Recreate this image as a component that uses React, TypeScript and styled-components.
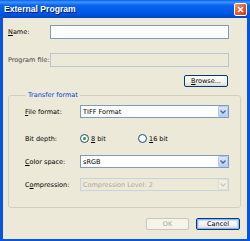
import styled, { createGlobalStyle } from "styled-components";

const Global = createGlobalStyle`
  html, body {
    margin: 0;
    padding: 0;
    background: #ffffff;
  }
  * {
    box-sizing: border-box;
  }
`;

const Window = styled.div`
  width: 250px;
  height: 241px;
  display: flex;
  flex-direction: column;
  background: #0855dd;
  font-family: "DejaVu Sans", "Liberation Sans", sans-serif;
  font-size: 6.5px;
  color: #000000;
  overflow: hidden;
`;

const TitleBar = styled.div`
  height: 18px;
  flex: none;
  display: flex;
  align-items: center;
  justify-content: space-between;
  padding: 0 3px 0 4px;
  background: linear-gradient(
    180deg,
    #0a5fe8 0%,
    #3d95ff 12%,
    #0a62f0 30%,
    #0058e6 70%,
    #0046c8 100%
  );
`;

const Title = styled.span`
  color: #ffffff;
  font-family: "Liberation Sans", "DejaVu Sans", sans-serif;
  font-weight: bold;
  font-size: 8.6px;
  text-shadow: 1px 1px 0 #0a1e6e;
`;

const CloseBtn = styled.div`
  width: 13px;
  height: 13px;
  border: 1px solid #ffffff;
  border-radius: 2px;
  background: linear-gradient(135deg, #f29a74 0%, #e35b2c 50%, #c2401a 100%);
  display: flex;
  align-items: center;
  justify-content: center;
`;

const Body = styled.div`
  flex: 1;
  margin: 0 3px 2px 3px;
  background: #ece9d8;
  padding: 7px 6px 0 5px;
  display: flex;
  flex-direction: column;
`;

const FieldRow = styled.div<{ $mb: number }>`
  display: flex;
  align-items: center;
  margin-bottom: ${({ $mb }) => $mb}px;
  padding-right: 12px;
`;

const Label = styled.label<{ $w: number; $muted?: boolean }>`
  width: ${({ $w }) => $w}px;
  flex: none;
  color: ${({ $muted }) => ($muted ? "#444444" : "#000000")};
  white-space: nowrap;
`;

const TextBox = styled.div<{ $disabled?: boolean }>`
  flex: 1;
  height: 14px;
  border: 1px solid #7f9db9;
  background: ${({ $disabled }) => ($disabled ? "#ece9d8" : "#ffffff")};
  ${({ $disabled }) => ($disabled ? "border-color: #b9c6d2;" : "")}
`;

const BrowseRow = styled.div`
  display: flex;
  justify-content: flex-end;
  padding-right: 13px;
  margin-bottom: 4px;
`;

const Button = styled.div<{ $disabled?: boolean; $default?: boolean; $w: number }>`
  width: ${({ $w }) => $w}px;
  height: 12px;
  border: 1px solid ${({ $disabled }) => ($disabled ? "#c9c7ba" : "#003c74")};
  border-radius: 2px;
  background: ${({ $disabled }) =>
    $disabled ? "#f5f4ea" : "linear-gradient(180deg, #ffffff 0%, #f3f3ef 60%, #dcdad0 100%)"};
  color: ${({ $disabled }) => ($disabled ? "#aca899" : "#000000")};
  box-shadow: ${({ $default }) =>
    $default ? "inset 0 0 0 1px #8fb2f2, inset 0 0 0 2px #cfdcf7" : "none"};
  display: flex;
  align-items: center;
  justify-content: center;
  line-height: 1;
`;

const Group = styled.fieldset`
  margin: 0;
  padding: 6px 11px 16px 16px;
  border: 1px solid #d0d0bf;
  border-radius: 3px;
  display: flex;
  flex-direction: column;
  min-inline-size: 0;
`;

const Legend = styled.legend`
  color: #0046d5;
  padding: 0 2px;
  margin-left: 1px;
`;

const GroupRow = styled.div<{ $mb: number }>`
  display: flex;
  align-items: center;
  height: 13px;
  margin-bottom: ${({ $mb }) => $mb}px;
`;

const Select = styled.div<{ $disabled?: boolean }>`
  flex: 1;
  height: 13px;
  border: 1px solid ${({ $disabled }) => ($disabled ? "#c9d3dc" : "#7f9db9")};
  background: ${({ $disabled }) => ($disabled ? "#ece9d8" : "#ffffff")};
  display: flex;
  align-items: center;
  padding-left: 2px;
  color: ${({ $disabled }) => ($disabled ? "#aca899" : "#000000")};
`;

const SelectText = styled.span`
  flex: 1;
`;

const DropBtn = styled.div<{ $disabled?: boolean }>`
  width: 10px;
  height: 11px;
  background: ${({ $disabled }) =>
    $disabled ? "#f1efe2" : "linear-gradient(180deg, #dbe6fd 0%, #b8cdf8 100%)"};
  border: 1px solid ${({ $disabled }) => ($disabled ? "#e0ded2" : "#b6c8f3")};
  border-radius: 1px;
  display: flex;
  align-items: center;
  justify-content: center;
`;

const Radios = styled.div`
  flex: 1;
  display: flex;
  align-items: center;
`;

const RadioItem = styled.div<{ $w: number }>`
  width: ${({ $w }) => $w}px;
  display: flex;
  align-items: center;
  gap: 2px;
`;

const RadioDot = styled.div<{ $checked?: boolean }>`
  width: 9px;
  height: 9px;
  border-radius: 50%;
  border: 1px solid #1c5180;
  background: radial-gradient(circle, #ffffff 40%, #e4e3dc 100%);
  display: flex;
  align-items: center;
  justify-content: center;
  &::after {
    content: "";
    width: 3px;
    height: 3px;
    border-radius: 50%;
    background: ${({ $checked }) => ($checked ? "#21a121" : "transparent")};
  }
`;

const Footer = styled.div`
  display: flex;
  justify-content: flex-end;
  gap: 7px;
  padding-right: 1px;
  margin-top: 10px;
`;

const Chevron = ({ color }: { color: string }) => (
  <svg width="6" height="4" viewBox="0 0 6 4">
    <path d="M0.5 0.5 L3 3 L5.5 0.5" fill="none" stroke={color} strokeWidth="1.3" />
  </svg>
);

const App = () => {
  return (
    <>
      <Global />
      <Window>
        <TitleBar>
          <Title>External Program</Title>
          <CloseBtn>
            <svg width="7" height="7" viewBox="0 0 7 7">
              <path d="M1 1 L6 6 M6 1 L1 6" stroke="#ffffff" strokeWidth="1.6" />
            </svg>
          </CloseBtn>
        </TitleBar>
        <Body>
          <FieldRow $mb={14}>
            <Label $w={42}>
              <u>N</u>ame:
            </Label>
            <TextBox />
          </FieldRow>
          <FieldRow $mb={8}>
            <Label $w={42} $muted>
              Program file:
            </Label>
            <TextBox $disabled />
          </FieldRow>
          <BrowseRow>
            <Button $w={44}>
              <span>
                <u>B</u>rowse...
              </span>
            </Button>
          </BrowseRow>
          <Group>
            <Legend>Transfer format</Legend>
            <GroupRow $mb={14}>
              <Label $w={55}>
                <u>F</u>ile format:
              </Label>
              <Select>
                <SelectText>TIFF Format</SelectText>
                <DropBtn>
                  <Chevron color="#4d6185" />
                </DropBtn>
              </Select>
            </GroupRow>
            <GroupRow $mb={10}>
              <Label $w={55}>Bit depth:</Label>
              <Radios>
                <RadioItem $w={58}>
                  <RadioDot $checked />
                  <span>
                    <u>8</u> bit
                  </span>
                </RadioItem>
                <RadioItem $w={40}>
                  <RadioDot />
                  <span>
                    <u>1</u>6 bit
                  </span>
                </RadioItem>
              </Radios>
            </GroupRow>
            <GroupRow $mb={10}>
              <Label $w={55}>
                <u>C</u>olor space:
              </Label>
              <Select>
                <SelectText>sRGB</SelectText>
                <DropBtn>
                  <Chevron color="#4d6185" />
                </DropBtn>
              </Select>
            </GroupRow>
            <GroupRow $mb={0}>
              <Label $w={55}>
                C<u>o</u>mpression:
              </Label>
              <Select $disabled>
                <SelectText>Compression Level: 2</SelectText>
                <DropBtn $disabled>
                  <Chevron color="#c9c7ba" />
                </DropBtn>
              </Select>
            </GroupRow>
          </Group>
          <Footer>
            <Button $w={43} $disabled>
              OK
            </Button>
            <Button $w={44} $default>
              Cancel
            </Button>
          </Footer>
        </Body>
      </Window>
    </>
  );
};

export default App;
